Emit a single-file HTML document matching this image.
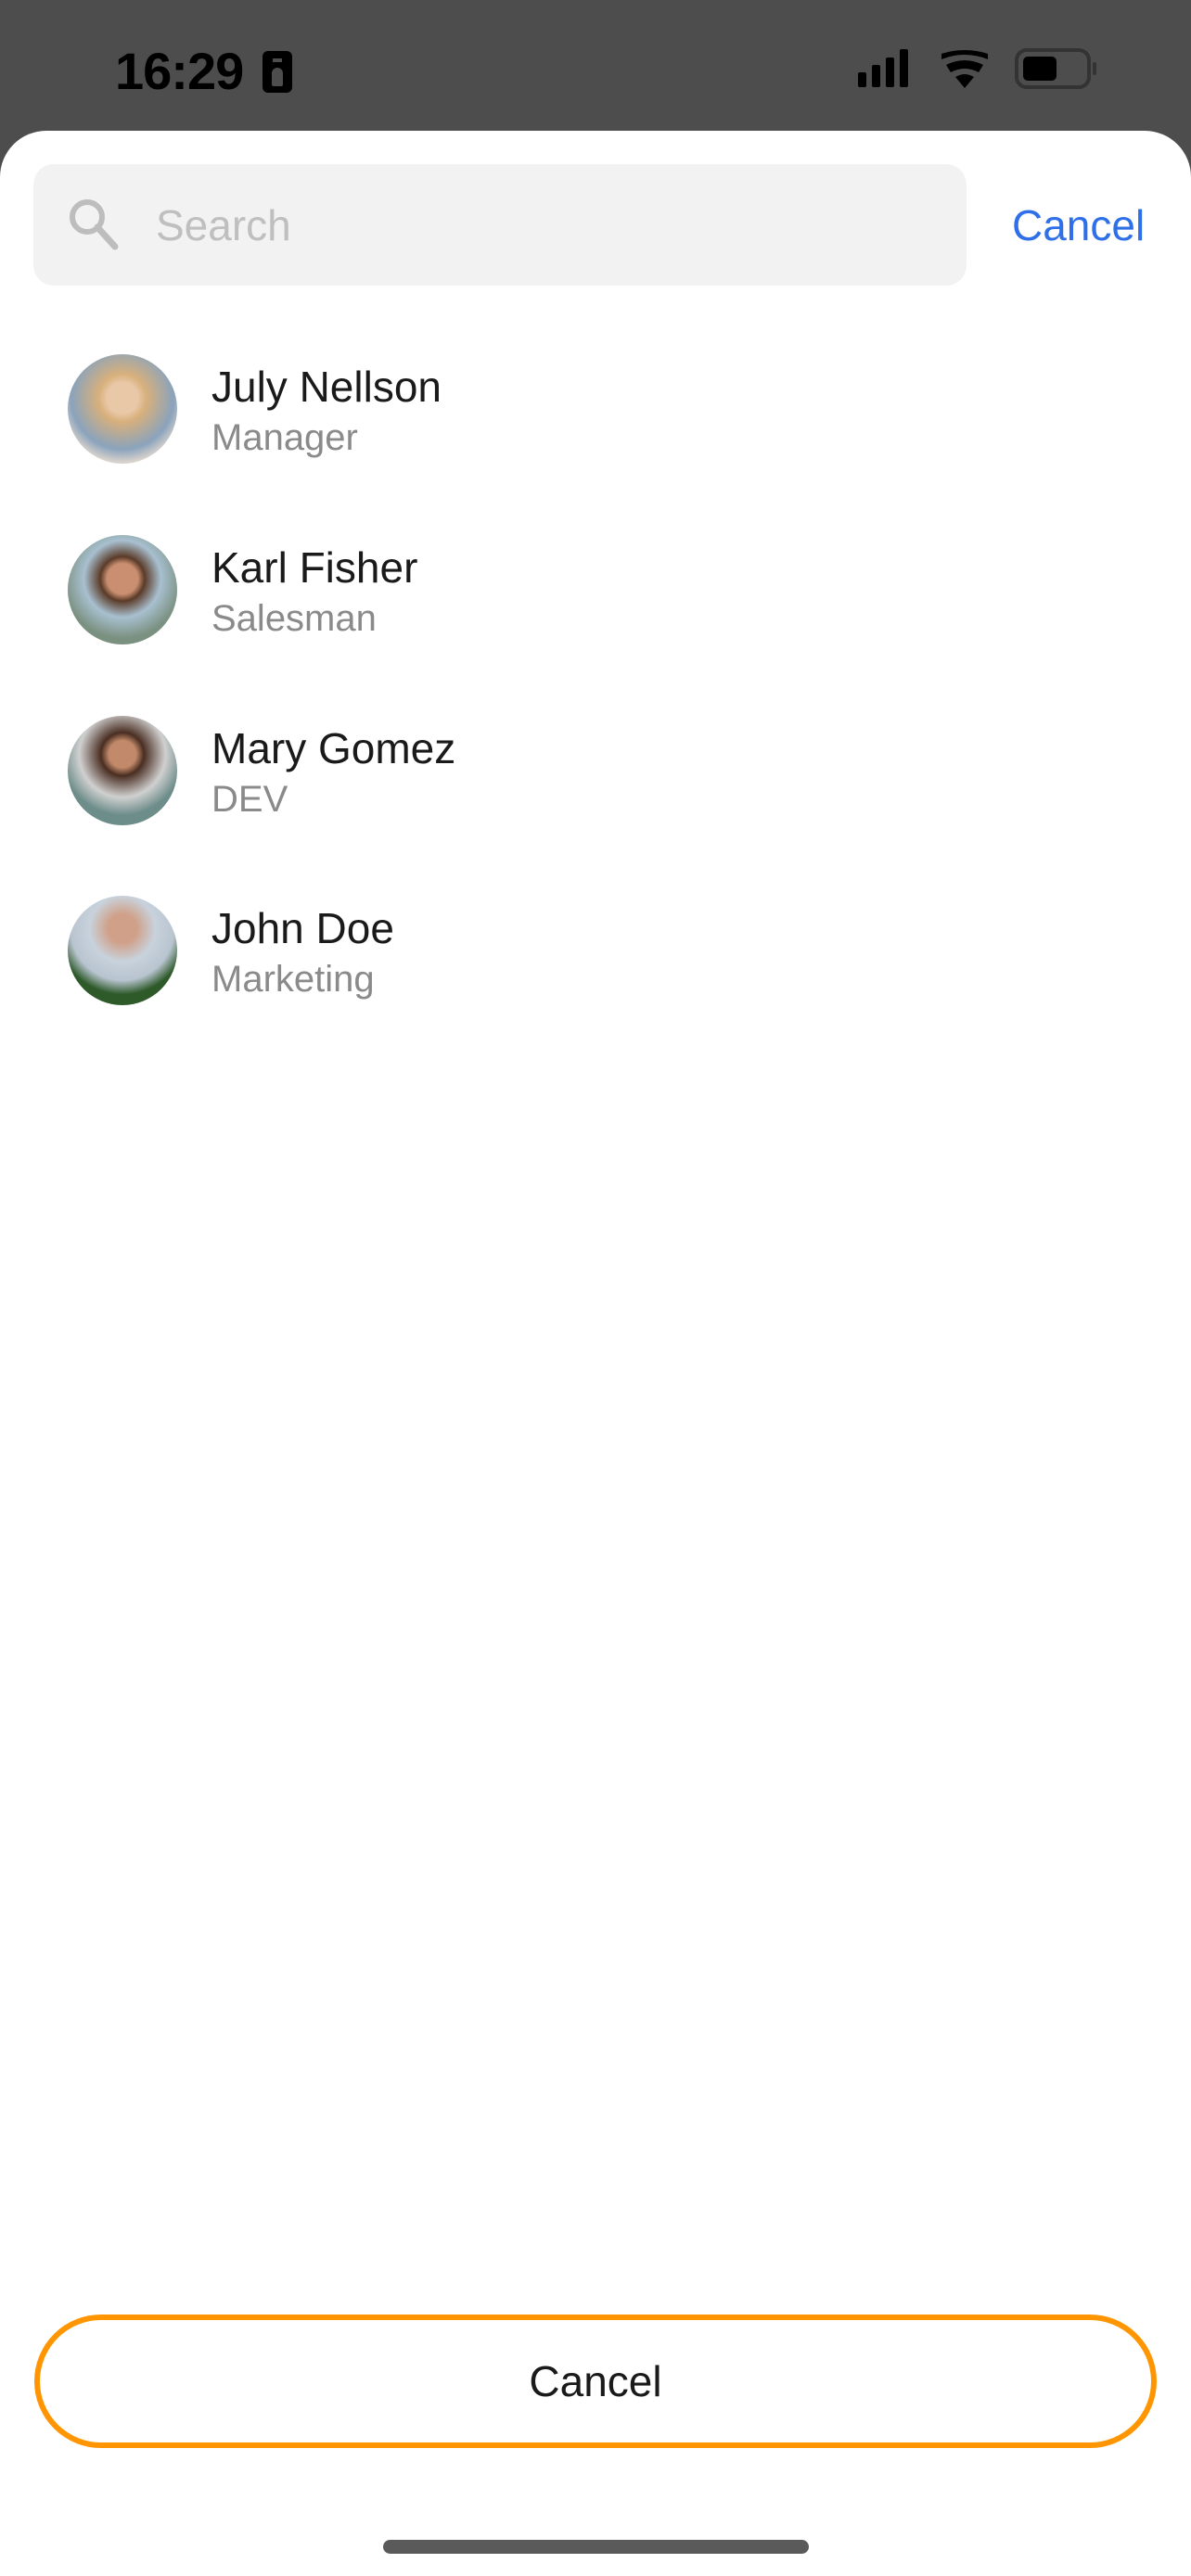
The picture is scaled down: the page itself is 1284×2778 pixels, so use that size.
<!DOCTYPE html>
<html><head><meta charset="utf-8"><style>
*{margin:0;padding:0;box-sizing:border-box}
body{width:1284px;height:2778px;background:#4d4d4d;font-family:"Liberation Sans",sans-serif;position:relative;overflow:hidden}
.time{position:absolute;left:124px;top:44px;font-size:56px;font-weight:bold;color:#000;letter-spacing:-1px}
.sheet{position:absolute;left:0;top:141px;width:1284px;height:2637px;background:#fff;border-radius:50px 50px 0 0}
.search{position:absolute;left:36px;top:177px;width:1006px;height:131px;background:#f2f2f2;border-radius:22px}
.stext{position:absolute;left:168px;top:216px;font-size:46px;color:#bfbfbf}
.cancel{position:absolute;left:1091px;top:216px;font-size:46px;color:#2f6fe8}
.av{position:absolute;left:73px;width:118px;height:118px;border-radius:50%}
.nm{position:absolute;left:228px;font-size:46px;color:#1a1a1a}
.sub{position:absolute;left:228px;font-size:40px;color:#8a8a8a}
.btn{position:absolute;left:37px;top:2496px;width:1210px;height:144px;border:6px solid #ff9500;border-radius:72px;text-align:center;line-height:132px;font-size:46px;color:#1a1a1a}
.home{position:absolute;left:413px;top:2739px;width:459px;height:15px;border-radius:8px;background:#5a5a5a}
</style></head><body>
<div class="time">16:29</div>
<div style="position:absolute;left:283px;top:55px;width:32px;height:45px;background:#000;border-radius:6px"><div style="position:absolute;left:11px;top:8px;width:10px;height:4px;background:#4d4d4d"></div><div style="position:absolute;left:10px;top:18px;width:12px;height:20px;background:#4d4d4d;border-radius:6px 6px 2px 2px"></div></div>
<svg style="position:absolute;left:920px;top:50px" width="270" height="50">
<rect x="5" y="28" width="9" height="16" rx="2"/><rect x="20" y="20" width="9" height="24" rx="2"/><rect x="35" y="12" width="9" height="32" rx="2"/><rect x="50" y="3" width="9" height="41" rx="2"/>
<path d="M95 8 Q120 0 145 8 L145 14 Q120 4 95 14Z M100 20 Q120 10 140 20 L135 28 Q120 20 105 28Z M110 33 Q120 27 130 33 L120 45Z"/>
<rect x="176" y="4" width="78" height="40" rx="11" fill="none" stroke="#333" stroke-width="4"/><rect x="183" y="11" width="36" height="26" rx="5"/><rect x="258" y="17" width="4" height="14" rx="2" fill="#333"/>
</svg>
<div class="sheet"></div>
<div class="search"></div>
<svg style="position:absolute;left:70px;top:210px" width="60" height="60"><circle cx="24" cy="24" r="16" fill="none" stroke="#bdbdbd" stroke-width="6"/><line x1="35" y1="35" x2="54" y2="56" stroke="#bdbdbd" stroke-width="7" stroke-linecap="round"/></svg>
<div class="stext">Search</div>
<div class="cancel">Cancel</div>

<div class="av" style="top:382px;background:radial-gradient(circle at 50% 40%,#e9c8a8 0 18%,#d8b07c 28%,#8aa3bc 60%,#d8d2cc 75%)"></div>
<div class="nm" style="top:390px">July Nellson</div><div class="sub" style="top:450px">Manager</div>

<div class="av" style="top:577px;background:radial-gradient(circle at 50% 40%,#c98f70 0 18%,#5b3b28 26%,#a8c0d0 45%,#7a9080 70%)"></div>
<div class="nm" style="top:585px">Karl Fisher</div><div class="sub" style="top:645px">Salesman</div>

<div class="av" style="top:772px;background:radial-gradient(circle at 50% 35%,#c28a6a 0 15%,#4a2e22 24%,#d0d0d0 48%,#6d8d8a 68%)"></div>
<div class="nm" style="top:780px">Mary Gomez</div><div class="sub" style="top:840px">DEV</div>

<div class="av" style="top:966px;background:radial-gradient(circle at 50% 30%,#d0a088 0 15%,#c8d2dc 35%,#b8c4cf 55%,#2e5a2a 70%)"></div>
<div class="nm" style="top:974px">John Doe</div><div class="sub" style="top:1034px">Marketing</div>

<div class="btn">Cancel</div>
<div class="home"></div>
</body></html>
